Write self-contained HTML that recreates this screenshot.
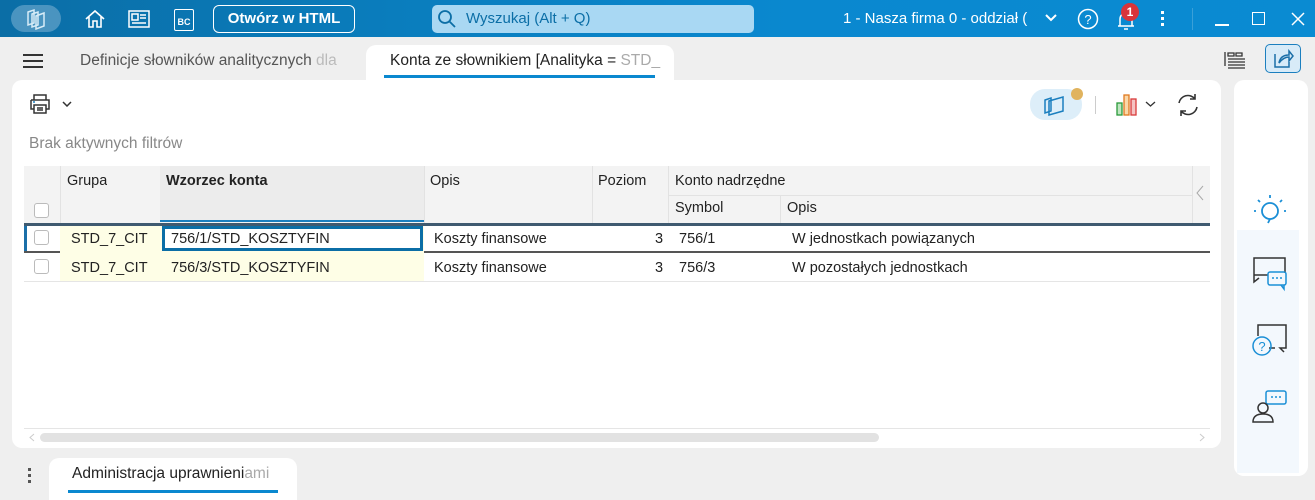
<!DOCTYPE html>
<html><head><meta charset="utf-8"><style>
*{box-sizing:border-box;margin:0;padding:0}
body{width:1315px;height:500px;overflow:hidden;background:#efefef;font-family:"Liberation Sans",sans-serif;font-size:14.5px;color:#222;position:relative}
.abs{position:absolute}
.top{left:0;top:0;width:1315px;height:37px;background:linear-gradient(90deg,#0b6ea6 0%,#0a7dbd 30%,#0a88cf 60%,#0a8bd2 100%)}
.cell{position:absolute;overflow:hidden;white-space:nowrap}
.hd{background:#f3f3f3;color:#333}
.cb{position:absolute;width:15px;height:15px;border:1px solid #bbb;border-radius:3px;background:#fff}
</style></head><body>
<div class="abs top"></div>
<div class="abs" style="left:11px;top:5px;width:50px;height:27px;border-radius:14px;background:#4a94c0"></div>
<svg class="abs" style="left:24px;top:8px" width="24" height="22" viewBox="0 0 24 22" fill="none" stroke="#d8ecf7" stroke-width="1.5"><path d="M4 4l6-2v13l-6 2z M8 6l6-2v13l-6 2z M12 8l8-3v13l-8 3z"/></svg>
<svg class="abs" style="left:84px;top:9px" width="22" height="20" viewBox="0 0 22 20" fill="none" stroke="#fff" stroke-width="1.6"><path d="M2 10L11 2l9 8M5 8v10h4v-6h4v6h4V8"/></svg>
<svg class="abs" style="left:128px;top:9px" width="22" height="20" viewBox="0 0 22 20" fill="none" stroke="#fff" stroke-width="1.5"><rect x="1" y="2" width="20" height="16"/><rect x="4" y="5" width="6" height="6"/><path d="M12 6h6M12 9h6M4 14h14"/></svg>
<div class="abs" style="left:174px;top:9px;width:20px;height:22px;border:1.5px solid #fff;border-radius:2px;color:#fff;font-size:9px;font-weight:bold;text-align:center;padding-top:7px">BC</div>
<div class="abs" style="left:213px;top:5px;width:142px;height:28px;border:1.5px solid #fff;border-radius:6px;color:#fff;font-weight:bold;font-size:15px;text-align:center;line-height:25px">Otwórz w HTML</div>
<div class="abs" style="left:432px;top:5px;width:322px;height:28px;border-radius:5px;background:#a9d8f3"></div>
<svg class="abs" style="left:437px;top:9px" width="20" height="20" viewBox="0 0 20 20" fill="none" stroke="#0b6ea6" stroke-width="1.8"><circle cx="8" cy="8" r="6"/><path d="M12.5 12.5L18 18"/></svg>
<div class="abs" style="left:466px;top:10px;color:#0b6ea6;font-size:15px">Wyszukaj (Alt + Q)</div>
<div class="abs" style="left:843px;top:10px;color:#fff;font-size:15px">1 - Nasza firma 0 - oddział (</div>
<svg class="abs" style="left:1045px;top:14px" width="12" height="8" viewBox="0 0 12 8" fill="none" stroke="#fff" stroke-width="2"><path d="M1 1l5 5 5-5"/></svg>
<svg class="abs" style="left:1077px;top:8px" width="22" height="22" viewBox="0 0 22 22" fill="none" stroke="#fff" stroke-width="1.5"><circle cx="11" cy="11" r="9.5"/><text x="11" y="16" font-size="13" fill="#fff" stroke="none" text-anchor="middle" font-family="Liberation Sans">?</text></svg>
<svg class="abs" style="left:1115px;top:9px" width="22" height="22" viewBox="0 0 22 22" fill="none" stroke="#fff" stroke-width="1.5"><path d="M5 17V10a6 6 0 0112 0v7zM3 17h16M9 20h4"/></svg>
<div class="abs" style="left:1121px;top:3px;width:18px;height:18px;border-radius:9px;background:#d8343a;color:#fff;font-size:12px;font-weight:bold;text-align:center;line-height:18px">1</div>
<div class="abs" style="left:1161px;top:11px;width:3px;height:3px;background:#fff;box-shadow:0 6px #fff,0 12px #fff"></div>
<div class="abs" style="left:1192px;top:8px;width:1px;height:22px;background:#3aa0d8"></div>
<div class="abs" style="left:1215px;top:24px;width:14px;height:1.5px;background:#fff"></div>
<div class="abs" style="left:1252px;top:12px;width:13px;height:13px;border:1.5px solid #fff"></div>
<svg class="abs" style="left:1291px;top:12px" width="14" height="14" viewBox="0 0 14 14" stroke="#fff" stroke-width="1.5"><path d="M1 1l12 12M13 1L1 13"/></svg>

<div class="abs" style="left:23px;top:54px;width:20px;height:2px;background:#333;box-shadow:0 6px #333,0 12px #333"></div>
<div class="abs" style="left:80px;top:52px;color:#555;font-size:15.5px">Definicje słowników analitycznych <span style="color:#bbb">dla</span></div>
<div class="abs" style="left:366px;top:45px;width:308px;height:40px;background:#fff;border-radius:10px 10px 0 0"></div>
<div class="abs" style="left:390px;top:52px;color:#222;font-size:15.5px">Konta ze słownikiem [Analityka = <span style="color:#aaa">STD_</span></div>
<div class="abs" style="left:384px;top:75px;width:271px;height:3px;background:#0a88cf"></div>
<svg class="abs" style="left:1223px;top:50px" width="24" height="22" viewBox="0 0 24 22" fill="none" stroke="#333" stroke-width="1.3"><path d="M2 2v14M5 3h6v3H5zM13 3h6v3h-6zM5 9h17M5 12h17M5 15h17M5 18h17"/></svg>
<div class="abs" style="left:1265px;top:44px;width:36px;height:29px;border:1.5px solid #1b7fbf;border-radius:5px;background:#d8ebf8"></div>
<svg class="abs" style="left:1271px;top:48px" width="24" height="22" viewBox="0 0 24 22" fill="none" stroke="#1b6fa8" stroke-width="1.5"><path d="M4 6v13h14v-5M8 15c1-6 5-8 10-8V3l4 5-4 5V9c-4 0-7 2-10 6z"/></svg>

<div class="abs" style="left:12px;top:80px;width:1209px;height:368px;background:#fff;border-radius:10px"></div>
<div class="abs" style="left:1234px;top:80px;width:74px;height:396px;background:#fff;border-radius:10px"></div>
<div class="abs" style="left:1237px;top:230px;width:62px;height:243px;background:#f3f8fd"></div>

<svg class="abs" style="left:28px;top:93px" width="24" height="22" viewBox="0 0 24 22" fill="none" stroke="#333" stroke-width="1.5"><path d="M6 7V2h12v5M3 7h18v9h-3M6 16H3V7M6 12h12v8H6zM9 15h6M9 17h6"/><path d="M5 9h2" stroke="#1b7fbf"/></svg>
<svg class="abs" style="left:62px;top:101px" width="10" height="6" viewBox="0 0 10 6" fill="none" stroke="#333" stroke-width="1.5"><path d="M1 1l4 4 4-4"/></svg>
<div class="abs" style="left:29px;top:135px;color:#888;font-size:15.5px">Brak aktywnych filtrów</div>
<div class="abs" style="left:1030px;top:89px;width:52px;height:31px;border-radius:15px;background:#ddeef9"></div>
<svg class="abs" style="left:1043px;top:94px" width="24" height="22" viewBox="0 0 24 22" fill="none" stroke="#1b7fbf" stroke-width="1.5"><path d="M2 6l6-2v13l-6 2z M6 7l14-4v14l-14 4z"/></svg>
<div class="abs" style="left:1071px;top:88px;width:12px;height:12px;border-radius:6px;background:#e0b35e"></div>
<div class="abs" style="left:1095px;top:96px;width:1px;height:18px;background:#ccc"></div>
<svg class="abs" style="left:1116px;top:93px" width="24" height="24" viewBox="0 0 24 24" stroke-width="1.3"><rect x="1" y="10" width="5" height="12" fill="#bfe5c0" stroke="#2a9a3a"/><rect x="8" y="2" width="5" height="20" fill="#fad8a8" stroke="#e07a20"/><rect x="15" y="6" width="5" height="16" fill="#f5c3c3" stroke="#d83a3a"/></svg>
<svg class="abs" style="left:1145px;top:101px" width="11" height="6" viewBox="0 0 11 6" fill="none" stroke="#333" stroke-width="1.3"><path d="M1 1l4.5 4 4.5-4"/></svg>
<svg class="abs" style="left:1175px;top:92px" width="26" height="26" viewBox="0 0 26 26" fill="none" stroke="#333" stroke-width="1.6"><path d="M4 11a9 9 0 0116-4M22 15a9 9 0 01-16 4M20 2v5h-5M6 24v-5h5"/></svg>

<!-- table header -->
<div class="abs hd" style="left:24px;top:166px;width:1186px;height:57px"></div>
<div class="abs" style="left:160px;top:166px;width:264px;height:56px;background:#ececec;border-bottom:2px solid #1b7fbf"></div>
<div class="abs" style="left:668px;top:195px;width:524px;height:1px;background:#e2e2e2"></div>
<div class="abs" style="left:60px;top:166px;width:1px;height:57px;background:#e2e2e2"></div>
<div class="abs" style="left:424px;top:166px;width:1px;height:57px;background:#e2e2e2"></div>
<div class="abs" style="left:592px;top:166px;width:1px;height:57px;background:#e2e2e2"></div>
<div class="abs" style="left:668px;top:166px;width:1px;height:57px;background:#e2e2e2"></div>
<div class="abs" style="left:780px;top:196px;width:1px;height:27px;background:#e2e2e2"></div>
<div class="abs" style="left:1192px;top:166px;width:1px;height:57px;background:#e2e2e2"></div>
<div class="cb" style="left:34px;top:203px"></div>
<div class="cell" style="left:67px;top:173px">Grupa</div>
<div class="cell" style="left:166px;top:173px;font-weight:bold">Wzorzec konta</div>
<div class="cell" style="left:430px;top:173px">Opis</div>
<div class="cell" style="left:598px;top:173px">Poziom</div>
<div class="cell" style="left:675px;top:173px">Konto nadrzędne</div>
<div class="cell" style="left:675px;top:200px">Symbol</div>
<div class="cell" style="left:787px;top:200px">Opis</div>
<svg class="abs" style="left:1195px;top:185px" width="10" height="16" viewBox="0 0 10 16" fill="none" stroke="#aaa" stroke-width="1"><path d="M8 1L2 8l6 7"/></svg>

<!-- rows -->
<div class="abs" style="left:24px;top:223px;width:1186px;height:3px;background:#3f5a70"></div>
<div class="abs" style="left:24px;top:251px;width:1186px;height:2px;background:#555"></div>
<div class="abs" style="left:24px;top:281px;width:1186px;height:1px;background:#e5e5e5"></div>
<div class="abs" style="left:60px;top:226px;width:364px;height:55px;background:#fefee6"></div>
<div class="abs" style="left:24px;top:226px;width:3px;height:25px;background:#1b6fa8"></div>
<div class="abs" style="left:162px;top:226px;width:261px;height:25px;border:3px solid #0b6ea6;background:#fff"></div>
<div class="cb" style="left:34px;top:230px"></div>
<div class="cb" style="left:34px;top:259px"></div>
<div class="cell" style="left:71px;top:231px">STD_7_CIT</div>
<div class="cell" style="left:171px;top:231px">756/1/STD_KOSZTYFIN</div>
<div class="cell" style="left:434px;top:231px">Koszty finansowe</div>
<div class="cell" style="left:655px;top:231px">3</div>
<div class="cell" style="left:679px;top:231px">756/1</div>
<div class="cell" style="left:792px;top:231px">W jednostkach powiązanych</div>
<div class="cell" style="left:71px;top:260px">STD_7_CIT</div>
<div class="cell" style="left:171px;top:260px">756/3/STD_KOSZTYFIN</div>
<div class="cell" style="left:434px;top:260px">Koszty finansowe</div>
<div class="cell" style="left:655px;top:260px">3</div>
<div class="cell" style="left:679px;top:260px">756/3</div>
<div class="cell" style="left:792px;top:260px">W pozostałych jednostkach</div>

<div class="abs" style="left:24px;top:428px;width:1186px;height:1px;background:#e5e5e5"></div>
<div class="abs" style="left:40px;top:433px;width:839px;height:9px;border-radius:5px;background:#e2e2e2"></div>
<svg class="abs" style="left:29px;top:433px" width="6" height="9" viewBox="0 0 6 9" fill="none" stroke="#ccc"><path d="M5 1L1 4.5 5 8"/></svg>
<svg class="abs" style="left:1199px;top:433px" width="6" height="9" viewBox="0 0 6 9" fill="none" stroke="#ccc"><path d="M1 1l4 3.5L1 8"/></svg>

<!-- right icons -->
<svg class="abs" style="left:1250px;top:190px" width="40" height="40" viewBox="0 0 40 40" fill="none" stroke="#1b8fd6" stroke-width="1.8"><circle cx="20" cy="21" r="8"/><path d="M20 8v-3M10 12l-2-2M30 12l2-2M6 21H4M34 21h2M20 29l-2 4"/></svg>
<svg class="abs" style="left:1250px;top:255px" width="40" height="40" viewBox="0 0 40 40" fill="none" stroke-width="1.5"><path d="M18 20H4V3h31v15M4 20v7l5-4" stroke="#333"/><rect x="18" y="17" width="18" height="13" rx="2" stroke="#1b8fd6"/><path d="M22 23h2M26 23h2M30 23h2M31 30l3 4v-4" stroke="#1b8fd6"/></svg>
<svg class="abs" style="left:1250px;top:322px" width="40" height="40" viewBox="0 0 40 40" fill="none" stroke-width="1.5"><path d="M8 14V3h28v23h-6l4 4M25 26h-6" stroke="#333"/><circle cx="12" cy="24" r="9" stroke="#1b8fd6"/><text x="12" y="29" font-size="13" fill="#1b8fd6" stroke="none" text-anchor="middle" font-family="Liberation Sans">?</text></svg>
<svg class="abs" style="left:1250px;top:388px" width="40" height="40" viewBox="0 0 40 40" fill="none" stroke-width="1.5"><rect x="16" y="3" width="20" height="13" rx="2" stroke="#1b8fd6"/><path d="M21 9h2M25 9h2M29 9h2" stroke="#1b8fd6"/><circle cx="13" cy="20" r="5" stroke="#333"/><path d="M3 34c0-6 4-8 10-8s10 2 10 8z" stroke="#333"/></svg>

<!-- bottom tab -->
<div class="abs" style="left:28px;top:468px;width:3px;height:3px;background:#555;box-shadow:0 6px #555,0 12px #555"></div>
<div class="abs" style="left:49px;top:458px;width:248px;height:42px;background:#fff;border-radius:10px 10px 0 0"></div>
<div class="abs" style="left:72px;top:465px;color:#222;font-size:15.5px">Administracja uprawnieni<span style="color:#aaa">ami</span></div>
<div class="abs" style="left:68px;top:490px;width:210px;height:3px;background:#0a88cf"></div>
</body></html>
